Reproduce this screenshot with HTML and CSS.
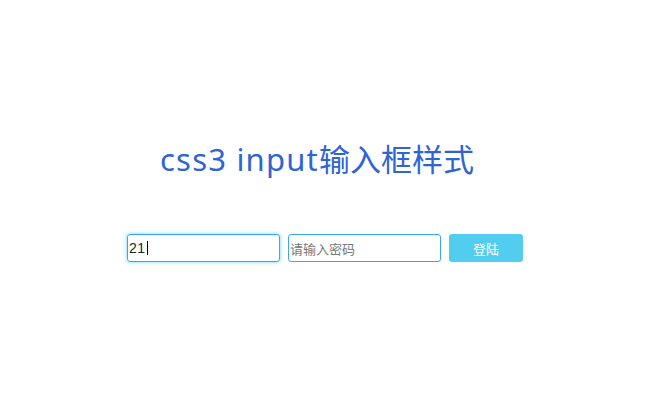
FILE: index.html
```html
<!DOCTYPE html>
<html lang="zh">
<head>
<meta charset="utf-8">
<title>css3 input输入框样式</title>
<link rel="stylesheet" href="styles.css">
</head>
<body>
<main class="page">
  <h1 class="title"><span class="latin">css3 input</span>输入框样式</h1>
  <form class="login">
    <div class="field field-focus"><span class="value">21</span><span class="caret"></span></div>
    <div class="field"><span class="placeholder">请输入密码</span></div>
    <button type="button" class="btn">登陆</button>
  </form>
</main>
</body>
</html>
```
FILE: styles.css
```css
html, body {
  margin: 0;
  padding: 0;
  background: #ffffff;
}
.page {
  width: 650px;
  height: 420px;
  display: flex;
  flex-direction: column;
  align-items: center;
  font-family: "Noto Sans", "Noto Sans CJK SC", sans-serif;
}
.title {
  margin: 136px 0 0 0;
  padding-right: 16px;
  font-size: 31px;
  line-height: 46px;
  font-weight: normal;
  color: #2f64d2;
}
.latin {
  letter-spacing: 1.2px;
}
.login {
  display: flex;
  gap: 8px;
  margin-top: 52px;
}
.field {
  box-sizing: border-box;
  width: 153px;
  height: 28px;
  border: 1px solid #3aa8ea;
  border-radius: 3px;
  display: flex;
  align-items: center;
  padding-left: 1px;
  font-size: 13px;
  font-family: "Liberation Sans", "Noto Sans CJK SC", sans-serif;
}
.field-focus {
  box-shadow: 0 0 4px #6fd4f7;
}
.value {
  color: #222;
  font-size: 14px;
  letter-spacing: 0.5px;
}
.caret {
  width: 1px;
  height: 14px;
  background: #000;
  margin-left: 1px;
}
.placeholder {
  color: #777;
}
.btn {
  width: 74px;
  height: 28px;
  border: none;
  border-radius: 3px;
  background: #52cdf0;
  color: #ffffff;
  font-size: 13px;
  font-family: "Noto Sans CJK SC", sans-serif;
  padding: 0;
}
```
